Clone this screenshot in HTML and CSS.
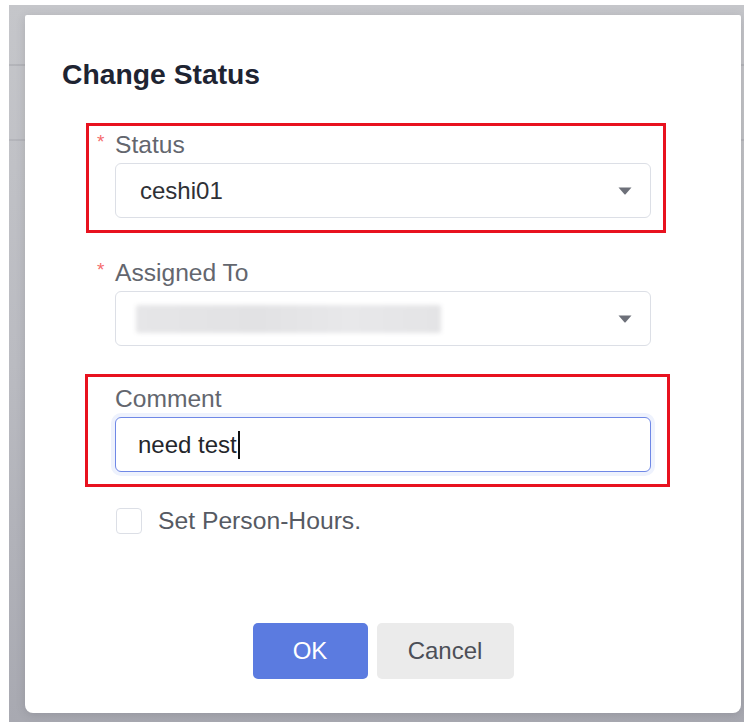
FILE: index.html
```html
<!DOCTYPE html>
<html lang="en">
<head>
<meta charset="utf-8">
<title>Change Status</title>
<link rel="stylesheet" href="styles.css">
</head>
<body>
  <div class="backdrop">
    <div class="dialog" role="dialog" aria-labelledby="dlg-title">
      <h2 class="dialog-title" id="dlg-title">Change Status</h2>

      <div class="form">
        <div class="form-item is-marked">
          <div class="form-label is-required">Status</div>
          <div class="select">
            <span class="select-value">ceshi01</span>
            <svg class="select-caret" width="14" height="8" viewBox="0 0 14 8" aria-hidden="true">
              <path d="M0.5 0.5 H13.5 L7.6 7.2 Q7 7.8 6.4 7.2 Z" fill="#6d7079"/>
            </svg>
          </div>
        </div>

        <div class="form-item form-item--plain">
          <div class="form-label is-required">Assigned To</div>
          <div class="select">
            <span class="select-value select-value--hidden"></span>
            <svg class="select-caret" width="14" height="8" viewBox="0 0 14 8" aria-hidden="true">
              <path d="M0.5 0.5 H13.5 L7.6 7.2 Q7 7.8 6.4 7.2 Z" fill="#6d7079"/>
            </svg>
          </div>
        </div>

        <div class="form-item is-marked form-item--comment">
          <div class="form-label">Comment</div>
          <div class="input is-focused">
            <span class="input-text">need test</span><span class="text-cursor"></span>
          </div>
        </div>

        <label class="check-row">
          <span class="checkbox"></span>
          <span class="check-label">Set Person-Hours.</span>
        </label>
      </div>

      <div class="dialog-footer">
        <button class="btn btn-primary" type="button">OK</button>
        <button class="btn btn-default" type="button">Cancel</button>
      </div>
    </div>
  </div>
</body>
</html>
```

FILE: styles.css
```css
* {
  box-sizing: border-box;
}

html, body {
  margin: 0;
  padding: 0;
  background: #ffffff;
}

body {
  width: 744px;
  height: 722px;
  overflow: hidden;
  font-family: "Liberation Sans", Arial, sans-serif;
}

/* dimmed page behind the modal, with faint table row lines */
.backdrop {
  margin: 5px 0 0 9px;
  width: 735px;
  height: 717px;
  padding: 10px 3px 9px 16px;
  background:
    linear-gradient(to bottom, transparent 59px, rgba(150, 151, 158, 0.35) 59px, rgba(150, 151, 158, 0.35) 61px, transparent 61px),
    linear-gradient(to bottom, transparent 134px, rgba(150, 151, 158, 0.3) 134px, rgba(150, 151, 158, 0.3) 136px, transparent 136px),
    linear-gradient(to bottom, #c5c6ca 0%, #babbc1 50%, #a8a9b1 100%);
}

.dialog {
  width: 716px;
  height: 698px;
  background: #ffffff;
  border-radius: 2px 2px 8px 8px;
  box-shadow: 0 2px 10px rgba(60, 62, 72, 0.18);
  padding: 42px 0 34px 0;
  display: flex;
  flex-direction: column;
}

.dialog-title {
  margin: 0 0 0 37px;
  font-size: 28.3px;
  line-height: 34px;
  font-weight: 700;
  color: #1e2432;
}

.form {
  margin-top: 32px;
  display: flex;
  flex-direction: column;
}

.form-item {
  margin-left: 61px;
  width: 580px;
  border: 3px solid transparent;
  padding: 4px 12px 12px 26px;
}

.form-item.is-marked {
  border-color: #e8121f;
}

.form-item--plain {
  margin-top: 18px;
}

.form-item--comment {
  margin-top: 13px;
  margin-left: 60px;
  width: 585px;
  padding: 7px 16px 12px 27px;
}

.form-label {
  font-size: 24.6px;
  line-height: 29px;
  color: #63666e;
  margin-bottom: 4px;
}

.form-label.is-required::before {
  content: "*";
  display: inline-block;
  width: 18px;
  margin-left: -18px;
  color: #f56c6c;
  font-size: 19px;
  vertical-align: top;
  line-height: 24px;
}

.select,
.input {
  width: 536px;
  height: 55px;
  border: 1px solid #dcdfe6;
  border-radius: 6px;
  display: flex;
  align-items: center;
  background: #ffffff;
}

.select {
  padding: 0 18px 0 24px;
  justify-content: space-between;
}

.select-value {
  font-size: 24px;
  color: #2f3136;
}

/* obscured assignee name */
.select-value--hidden {
  width: 305px;
  height: 28px;
  margin-left: -4px;
  background: linear-gradient(to right, #e6e6e8, #e2e2e4 40%, #e8e8ea 70%, #e4e4e6);
  filter: blur(2px);
  border-radius: 2px;
}

.select-caret {
  display: block;
  flex: none;
}

.input {
  padding: 0 20px 0 22px;
}

.input.is-focused {
  border: 1.5px solid #6f88e6;
  box-shadow: 0 0 0 4px #eef2fd;
}

.input-text {
  font-size: 24px;
  color: #24262b;
}

.text-cursor {
  display: inline-block;
  width: 2px;
  height: 28px;
  margin-left: 1px;
  background: #111111;
}

.check-row {
  margin: 19px 0 0 91px;
  display: flex;
  align-items: center;
  height: 29px;
}

.checkbox {
  width: 26px;
  height: 26px;
  border: 1.5px solid #dcdfe6;
  border-radius: 4px;
  background: #ffffff;
  flex: none;
}

.check-label {
  margin-left: 16px;
  font-size: 24.7px;
  line-height: 29px;
  color: #565a63;
}

.dialog-footer {
  margin-top: auto;
  display: flex;
  justify-content: center;
  gap: 9px;
}

.btn {
  height: 56px;
  border: none;
  border-radius: 5px;
  font-family: "Liberation Sans", Arial, sans-serif;
  font-size: 24px;
  padding: 0;
}

.btn-primary {
  width: 115px;
  background: #5b7be0;
  color: #ffffff;
}

.btn-default {
  width: 137px;
  background: #ebebeb;
  color: #4c4f57;
}
```
